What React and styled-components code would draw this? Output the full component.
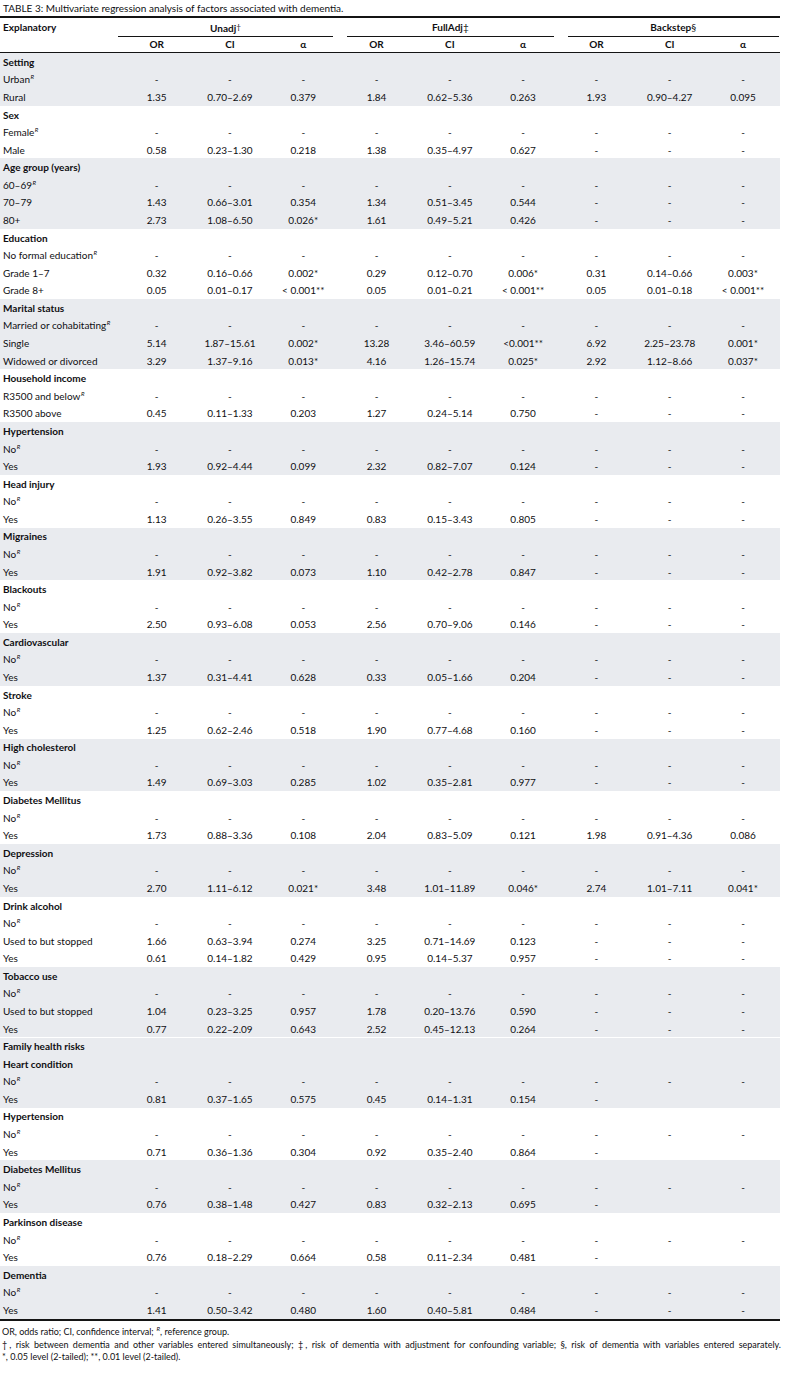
import React from "react";
import styled, { createGlobalStyle } from "styled-components";

const Global = createGlobalStyle`
  html, body { margin: 0; padding: 0; background: #fff; }
  body { font-family: Lato, "Open Sans", "Liberation Sans", sans-serif; color: #0f0f12; }
`;

const COLS = "120px repeat(9, 73.3px)";
const SHADE = "#e9ebef";

const Page = styled.div`
  width: 788px;
`;

const Title = styled.div`
  height: 16px;
  line-height: 17px;
  font-size: 10px;
  padding-left: 3px;
  white-space: nowrap;
`;

const TableWrap = styled.div`
  width: 780px;
  border-top: 2px solid #141414;
  border-bottom: 2px solid #141414;
`;

const HeaderGrid = styled.div`
  display: grid;
  grid-template-columns: ${COLS};
  grid-template-rows: 19px 15px;
  border-bottom: 1px solid #141414;
  font-size: 10px;
  font-weight: 700;
`;

const ExplanatoryHead = styled.div`
  grid-row: 1 / span 2;
  grid-column: 1;
  padding-left: 3px;
  line-height: 19px;
`;

const GroupHead = styled.div`
  grid-row: 1;
  grid-column: span 3;
  display: flex;
  align-items: stretch;
`;

const GroupLabel = styled.div`
  flex: 1;
  margin: 0 ${(p) => p.$mr}px 0 ${(p) => p.$ml}px;
  border-bottom: 1px solid #141414;
  text-align: center;
  line-height: 18px;
`;

const Mark = styled.span`
  font-weight: 400;
  font-size: ${(p) => p.$size || 10}px;
  vertical-align: ${(p) => (p.$raise ? "2px" : "baseline")};
`;

const SubHead = styled.div`
  grid-row: 2;
  text-align: center;
  line-height: 15px;
`;

const Group = styled.div`
  background: ${(p) => (p.$shaded ? SHADE : "#fff")};
  box-shadow: ${(p) => (p.$divider ? "inset 0 1px 0 #fff" : "none")};
`;

const Row = styled.div`
  display: grid;
  grid-template-columns: ${COLS};
  height: 17.58px;
  align-items: center;
  font-size: 10px;
  line-height: 12px;
`;

const Label = styled.div`
  padding-left: 3px;
  white-space: nowrap;
  font-weight: ${(p) => (p.$heading ? 700 : 400)};
`;

const Cell = styled.div`
  text-align: center;
  white-space: nowrap;
`;

const Ref = styled.sup`
  font-size: 6px;
  font-style: italic;
  line-height: 0;
  vertical-align: 4px;
  margin-left: 0.5px;
`;

const Notes = styled.div`
  width: 779px;
  padding: 5px 0 0 2px;
  font-size: 9px;
  line-height: 11.5px;
`;

const NoteLine = styled.div`
  white-space: nowrap;
  margin-bottom: ${(p) => p.$gap || 0}px;
`;

const JustLine = styled.div`
  text-align: justify;
  text-align-last: justify;
`;

const D = ["-", "-", "-", "-", "-", "-", "-", "-", "-"];

const yesNo = (vals) => [
  { label: "No", ref: true, v: D },
  { label: "Yes", v: vals },
];

const groups = [
  {
    title: "Setting",
    shaded: true,
    rows: [
      { label: "Urban", ref: true, v: D },
      { label: "Rural", v: ["1.35", "0.70–2.69", "0.379", "1.84", "0.62–5.36", "0.263", "1.93", "0.90–4.27", "0.095"] },
    ],
  },
  {
    title: "Sex",
    rows: [
      { label: "Female", ref: true, v: D },
      { label: "Male", v: ["0.58", "0.23–1.30", "0.218", "1.38", "0.35–4.97", "0.627", "-", "-", "-"] },
    ],
  },
  {
    title: "Age group (years)",
    shaded: true,
    rows: [
      { label: "60–69", ref: true, v: D },
      { label: "70–79", v: ["1.43", "0.66–3.01", "0.354", "1.34", "0.51–3.45", "0.544", "-", "-", "-"] },
      { label: "80+", v: ["2.73", "1.08–6.50", "0.026*", "1.61", "0.49–5.21", "0.426", "-", "-", "-"] },
    ],
  },
  {
    title: "Education",
    rows: [
      { label: "No formal education", ref: true, v: D },
      { label: "Grade 1–7", v: ["0.32", "0.16–0.66", "0.002*", "0.29", "0.12–0.70", "0.006*", "0.31", "0.14–0.66", "0.003*"] },
      { label: "Grade 8+", v: ["0.05", "0.01–0.17", "< 0.001**", "0.05", "0.01–0.21", "< 0.001**", "0.05", "0.01–0.18", "< 0.001**"] },
    ],
  },
  {
    title: "Marital status",
    shaded: true,
    rows: [
      { label: "Married or cohabitating", ref: true, v: D },
      { label: "Single", v: ["5.14", "1.87–15.61", "0.002*", "13.28", "3.46–60.59", "<0.001**", "6.92", "2.25–23.78", "0.001*"] },
      { label: "Widowed or divorced", v: ["3.29", "1.37–9.16", "0.013*", "4.16", "1.26–15.74", "0.025*", "2.92", "1.12–8.66", "0.037*"] },
    ],
  },
  {
    title: "Household income",
    rows: [
      { label: "R3500 and below", ref: true, v: D },
      { label: "R3500 above", v: ["0.45", "0.11–1.33", "0.203", "1.27", "0.24–5.14", "0.750", "-", "-", "-"] },
    ],
  },
  { title: "Hypertension", shaded: true, rows: yesNo(["1.93", "0.92–4.44", "0.099", "2.32", "0.82–7.07", "0.124", "-", "-", "-"]) },
  { title: "Head injury", rows: yesNo(["1.13", "0.26–3.55", "0.849", "0.83", "0.15–3.43", "0.805", "-", "-", "-"]) },
  { title: "Migraines", shaded: true, rows: yesNo(["1.91", "0.92–3.82", "0.073", "1.10", "0.42–2.78", "0.847", "-", "-", "-"]) },
  { title: "Blackouts", rows: yesNo(["2.50", "0.93–6.08", "0.053", "2.56", "0.70–9.06", "0.146", "-", "-", "-"]) },
  { title: "Cardiovascular", shaded: true, rows: yesNo(["1.37", "0.31–4.41", "0.628", "0.33", "0.05–1.66", "0.204", "-", "-", "-"]) },
  { title: "Stroke", rows: yesNo(["1.25", "0.62–2.46", "0.518", "1.90", "0.77–4.68", "0.160", "-", "-", "-"]) },
  { title: "High cholesterol", shaded: true, rows: yesNo(["1.49", "0.69–3.03", "0.285", "1.02", "0.35–2.81", "0.977", "-", "-", "-"]) },
  { title: "Diabetes Mellitus", rows: yesNo(["1.73", "0.88–3.36", "0.108", "2.04", "0.83–5.09", "0.121", "1.98", "0.91–4.36", "0.086"]) },
  { title: "Depression", shaded: true, rows: yesNo(["2.70", "1.11–6.12", "0.021*", "3.48", "1.01–11.89", "0.046*", "2.74", "1.01–7.11", "0.041*"]) },
  {
    title: "Drink alcohol",
    rows: [
      { label: "No", ref: true, v: D },
      { label: "Used to but stopped", v: ["1.66", "0.63–3.94", "0.274", "3.25", "0.71–14.69", "0.123", "-", "-", "-"] },
      { label: "Yes", v: ["0.61", "0.14–1.82", "0.429", "0.95", "0.14–5.37", "0.957", "-", "-", "-"] },
    ],
  },
  {
    title: "Tobacco use",
    shaded: true,
    rows: [
      { label: "No", ref: true, v: D },
      { label: "Used to but stopped", v: ["1.04", "0.23–3.25", "0.957", "1.78", "0.20–13.76", "0.590", "-", "-", "-"] },
      { label: "Yes", v: ["0.77", "0.22–2.09", "0.643", "2.52", "0.45–12.13", "0.264", "-", "-", "-"] },
    ],
  },
  {
    title: "Family health risks",
    shaded: true,
    divider: true,
    rows: [
      { label: "Heart condition", heading: true, v: [] },
      { label: "No", ref: true, v: D },
      { label: "Yes", v: ["0.81", "0.37–1.65", "0.575", "0.45", "0.14–1.31", "0.154", "-", "", ""] },
    ],
  },
  { title: "Hypertension", rows: yesNo(["0.71", "0.36–1.36", "0.304", "0.92", "0.35–2.40", "0.864", "-", "", ""]) },
  { title: "Diabetes Mellitus", shaded: true, rows: yesNo(["0.76", "0.38–1.48", "0.427", "0.83", "0.32–2.13", "0.695", "-", "", ""]) },
  { title: "Parkinson disease", rows: yesNo(["0.76", "0.18–2.29", "0.664", "0.58", "0.11–2.34", "0.481", "-", "", ""]) },
  { title: "Dementia", shaded: true, rows: yesNo(["1.41", "0.50–3.42", "0.480", "1.60", "0.40–5.81", "0.484", "-", "-", "-"]) },
];

const subHeads = ["OR", "CI", "α", "OR", "CI", "α", "OR", "CI", "α"];

function DataRow({ row }) {
  return (
    <Row>
      <Label $heading={row.heading}>
        {row.label}
        {row.ref && <Ref>R</Ref>}
      </Label>
      {row.v.map((val, i) => (
        <Cell key={i}>{val}</Cell>
      ))}
    </Row>
  );
}

export default function App() {
  return (
    <Page>
      <Global />
      <Title>TABLE 3: Multivariate regression analysis of factors associated with dementia.</Title>
      <TableWrap>
        <HeaderGrid>
          <ExplanatoryHead>Explanatory</ExplanatoryHead>
          <GroupHead>
            <GroupLabel $ml={-2} $mr={7}>
              Unadj<Mark $size={8} $raise>†</Mark>
            </GroupLabel>
          </GroupHead>
          <GroupHead>
            <GroupLabel $ml={7} $mr={6}>
              FullAdj<Mark>‡</Mark>
            </GroupLabel>
          </GroupHead>
          <GroupHead>
            <GroupLabel $ml={8} $mr={1}>
              Backstep<Mark>§</Mark>
            </GroupLabel>
          </GroupHead>
          <SubHead style={{ gridColumn: 1 }} />
          {subHeads.map((s, i) => (
            <SubHead key={i}>{s}</SubHead>
          ))}
        </HeaderGrid>
        {groups.map((g, gi) => (
          <Group key={gi} $shaded={g.shaded} $divider={g.divider}>
            <Row>
              <Label $heading>{g.title}</Label>
            </Row>
            {g.rows.map((r, ri) => (
              <DataRow key={ri} row={r} />
            ))}
          </Group>
        ))}
      </TableWrap>
      <Notes>
        <NoteLine $gap={2}>
          OR, odds ratio; CI, confidence interval; <Ref>R</Ref>, reference group.
        </NoteLine>
        <JustLine>
          †, risk between dementia and other variables entered simultaneously; ‡, risk of dementia with adjustment for
          confounding variable; §, risk of dementia with variables entered separately.
        </JustLine>
        <NoteLine>*, 0.05 level (2-tailed); **, 0.01 level (2-tailed).</NoteLine>
      </Notes>
    </Page>
  );
}
